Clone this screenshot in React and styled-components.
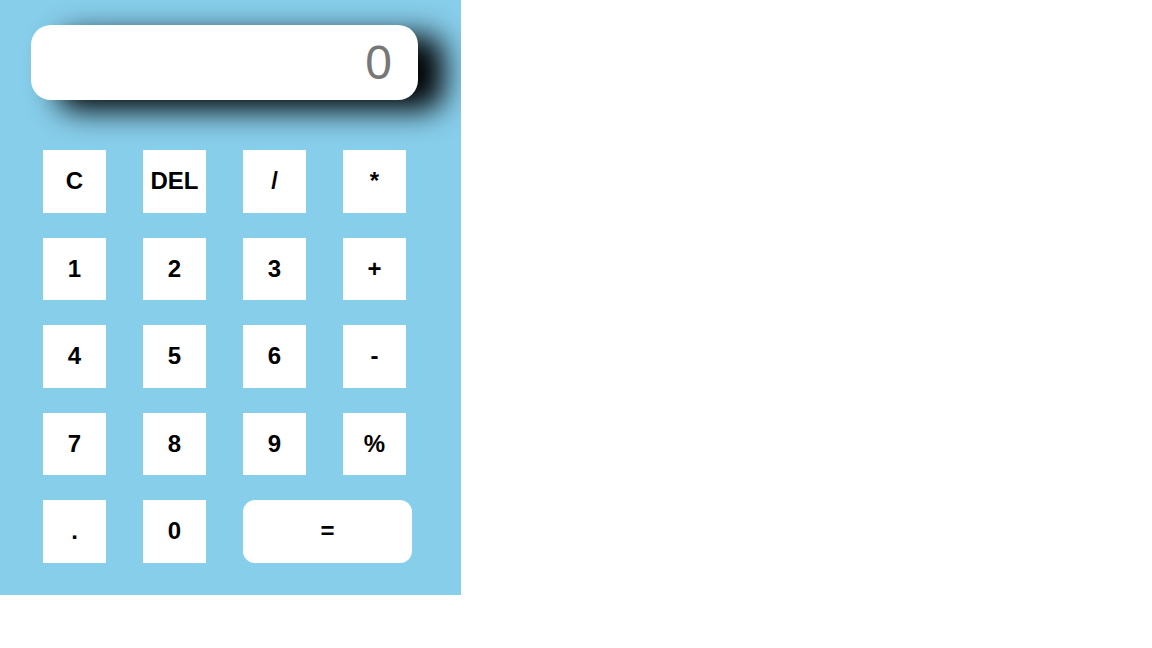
import React from 'react';
import styled, { createGlobalStyle } from 'styled-components';

const GlobalStyle = createGlobalStyle`
  body {
    margin: 0;
    background: #fff;
    font-family: "Liberation Sans", Arial, sans-serif;
  }
`;

const Calculator = styled.div`
  width: 461px;
  height: 595px;
  box-sizing: border-box;
  background-color: #87ceeb;
  padding: 25px 0 0 31px;
  overflow: hidden;
`;

const Display = styled.div`
  width: 387px;
  height: 75px;
  box-sizing: border-box;
  background: #fff;
  border-radius: 20px;
  box-shadow: 26px 10px 30px #000;
  display: flex;
  align-items: center;
  justify-content: flex-end;
  padding-right: 26px;
  font-size: 48px;
  color: #777;
`;

const Keys = styled.div`
  display: grid;
  grid-template-columns: repeat(4, 63px);
  grid-auto-rows: 62.5px;
  column-gap: 37px;
  row-gap: 25px;
  margin: 50px 0 0 12px;
`;

const Key = styled.button`
  width: ${props => (props.$wide ? '169px' : '63px')};
  height: 100%;
  grid-column: ${props => (props.$wide ? 'span 2' : 'auto')};
  border: none;
  padding: 0;
  background: #fff;
  border-radius: ${props => (props.$wide ? '12px' : '0')};
  font-family: "Liberation Sans", Arial, sans-serif;
  font-weight: bold;
  font-size: 24px;
  color: #000;
  cursor: pointer;
`;

const keys = ['C', 'DEL', '/', '*', '1', '2', '3', '+', '4', '5', '6', '-', '7', '8', '9', '%', '.', '0'];

const App = () => {
  return (
    <>
      <GlobalStyle />
      <Calculator>
        <Display>0</Display>
        <Keys>
          {keys.map(k => (
            <Key key={k}>{k}</Key>
          ))}
          <Key $wide>=</Key>
        </Keys>
      </Calculator>
    </>
  );
};

export default App;
